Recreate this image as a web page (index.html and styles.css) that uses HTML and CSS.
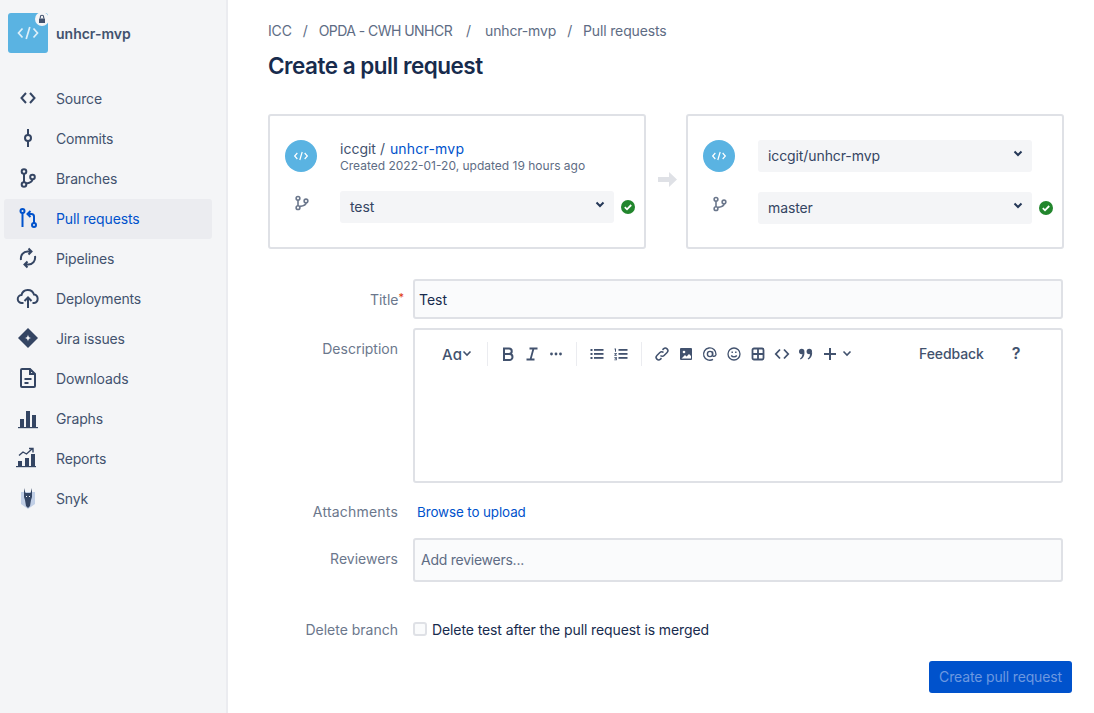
FILE: index.html
```html
<!DOCTYPE html>
<html>
  <head>
    <title>Create a pull request</title>
    <meta charset="UTF-8"/>
    <link rel="stylesheet" href="styles.css">
  </head>
  <body>
    <div class="sidebar">
      <div class="repo-head">
        <div class="repo-logo">
          <svg width="24" height="24" viewBox="0 0 24 24" fill="none" stroke="#dff0f9" stroke-width="1.7"><path d="M6.500 7.500 2.500 12l4 4.500M17.500 7.500l4 4.500-4 4.500M13.800 6l-3.600 12"/></svg>
          <span class="lock-badge">
            <svg width="10" height="10" viewBox="0 0 10 10"><path d="M2 4.500h6V9H2z" fill="#42526e"/><path d="M3.300 4.500V3a1.700 1.700 0 0 1 3.400 0v1.500" fill="none" stroke="#42526e" stroke-width="1.100"/></svg>
          </span>
        </div>
        <span class="repo-name">unhcr-mvp</span>
      </div>
      <div class="nav">
        <a class="nav-item">
          <svg class="nav-icon" viewBox="0 0 24 24" fill="none" stroke="#344563" stroke-width="2"><path d="M10 7 5.500 12l4.500 5M14 7l4.500 5-4.500 5"/></svg>
          Source
        </a>
        <a class="nav-item">
          <svg class="nav-icon" viewBox="0 0 24 24" fill="none" stroke="#344563" stroke-width="2"><circle cx="12" cy="12" r="3"/><path d="M12 3v6M12 15v6"/></svg>
          Commits
        </a>
        <a class="nav-item">
          <svg class="nav-icon" viewBox="0 0 24 24" fill="none" stroke="#344563" stroke-width="2"><circle cx="8" cy="5.500" r="2.300"/><circle cx="8" cy="18.500" r="2.300"/><circle cx="16.500" cy="11" r="2.300"/><path d="M8 7.800v8.400M16.500 13.300c0 2.700-3.500 3.700-6.300 4.200"/></svg>
          Branches
        </a>
        <a class="nav-item active">
          <svg class="nav-icon" viewBox="0 0 24 24" fill="none" stroke="#0052cc" stroke-width="2"><circle cx="6.500" cy="5" r="2"/><circle cx="18" cy="19" r="2"/><path d="M6.500 7v14M18 17v-6.500c0-1.700-1-2.500-2.500-2.500h-2.500M14.500 5l-3 3 3 3"/></svg>
          Pull requests
        </a>
        <a class="nav-item">
          <svg class="nav-icon" viewBox="0 0 24 24" fill="none" stroke="#344563" stroke-width="2"><path d="M5 14C4.200 9 7.500 5.500 11.500 5.500H15M12.500 2.500l3 3-3 3M19 10c.8 5-2.500 8.500-6.500 8.500H9M11.500 21.500l-3-3 3-3"/></svg>
          Pipelines
        </a>
        <a class="nav-item">
          <svg class="nav-icon" viewBox="0 0 24 24" fill="none" stroke="#344563" stroke-width="2"><path d="M7.500 17H6a4 4 0 0 1-.5-8A6.500 6.500 0 0 1 18 8.500a4.300 4.300 0 0 1 0 8.500h-1.500M12 22v-10M8.500 15l3.500-3.500 3.500 3.500"/></svg>
          Deployments
        </a>
        <a class="nav-item">
          <svg class="nav-icon" viewBox="0 0 24 24"><path d="M12 2 22 12 12 22 2 12z" fill="#344563"/><path d="M12 8.500c.3 2.300 1.200 3.200 3.500 3.500-2.300.3-3.200 1.200-3.500 3.500-.3-2.300-1.200-3.200-3.500-3.500 2.300-.3 3.200-1.200 3.500-3.500z" fill="#f4f5f7"/></svg>
          Jira issues
        </a>
        <a class="nav-item">
          <svg class="nav-icon" viewBox="0 0 24 24" fill="none" stroke="#344563" stroke-width="2"><path d="M6 3h8l5 5v12a1 1 0 0 1-1 1H6a1 1 0 0 1-1-1V4a1 1 0 0 1 1-1zM14 3v5h5M8.500 13h7M8.500 17h4"/></svg>
          Downloads
        </a>
        <a class="nav-item">
          <svg class="nav-icon" viewBox="0 0 24 24" fill="#344563"><rect x="4" y="13" width="4" height="8"/><rect x="10" y="5" width="4" height="16"/><rect x="16" y="9" width="4" height="12"/><rect x="2" y="21" width="20" height="1.200"/></svg>
          Graphs
        </a>
        <a class="nav-item">
          <svg class="nav-icon" viewBox="0 0 24 24" fill="#344563"><rect x="2" y="15" width="4" height="5"/><rect x="9" y="12" width="4" height="8"/><rect x="15" y="8" width="4" height="12"/><rect x="0" y="20" width="20" height="1.200"/><path d="M3 9.500l4-3.500 3.500 2L16 3M13 2.500h4v4" fill="none" stroke="#344563" stroke-width="1.400"/></svg>
          Reports
        </a>
        <a class="nav-item">
          <svg class="nav-icon" viewBox="0 0 24 24"><path d="M5 6h14v12l-7 5-7-5z" fill="#c1cfe6"/><path d="M8 2l1.500 5h5L16 2v9l-1 3-1 6-2 2-2-2-1-6-1-3z" fill="#344563"/><path d="M10 10h1v1h-1zM13 10h1v1h-1z" fill="#f4f5f7"/></svg>
          Snyk
        </a>
      </div>
    </div>

    <div class="main">
      <div class="breadcrumbs">
        <span>ICC</span><span class="sep">/</span><span class="crumb-org">OPDA - CWH UNHCR</span><span class="sep">/</span><span>unhcr-mvp</span><span class="sep">/</span><span>Pull requests</span>
      </div>
      <h1>Create a pull request</h1>

      <div class="branches">
        <div class="card">
          <div class="card-row">
            <div class="icon-col">
              <span class="round-logo"><svg width="16" height="16" viewBox="0 0 24 24" fill="none" stroke="#fff" stroke-width="1.800"><path d="M6.500 7.500 2.500 12l4 4.500M17.500 7.500l4 4.500-4 4.500M13.800 6l-3.600 12"/></svg></span>
            </div>
            <div class="repo-info">
              <div class="repo-title">iccgit / <a>unhcr-mvp</a></div>
              <div class="repo-meta">Created 2022-01-20, updated 19 hours ago</div>
            </div>
          </div>
          <div class="card-row branch-row">
            <div class="icon-col">
              <svg width="16" height="16" viewBox="0 0 24 24" fill="none" stroke="#6b778c" stroke-width="2.400"><circle cx="6" cy="5" r="2.800"/><circle cx="6" cy="19" r="2.800"/><circle cx="18" cy="9" r="2.800"/><path d="M6 8v8M18 12c0 3.500-5 4.500-9 5"/></svg>
            </div>
            <div class="select">test<svg class="chevron" width="10" height="8" viewBox="0 0 10 8" fill="none" stroke="#253858" stroke-width="2"><path d="M1.500 1.500 5 5l3.500-3.500"/></svg></div>
            <svg class="ok" width="14" height="14" viewBox="0 0 14 14"><circle cx="7" cy="7" r="7" fill="#22862d"/><path d="M3.800 7.200 6 9.300l4.200-4.300" fill="none" stroke="#fff" stroke-width="1.800"/></svg>
          </div>
        </div>

        <div class="arrow-col">
          <svg width="19" height="15" viewBox="0 0 19 15" fill="#dfe1e6"><path d="M0 5h11V0l8 7.500-8 7.500v-5H0z"/></svg>
        </div>

        <div class="card">
          <div class="card-row">
            <div class="icon-col">
              <span class="round-logo"><svg width="16" height="16" viewBox="0 0 24 24" fill="none" stroke="#fff" stroke-width="1.800"><path d="M6.500 7.500 2.500 12l4 4.500M17.500 7.500l4 4.500-4 4.500M13.800 6l-3.600 12"/></svg></span>
            </div>
            <div class="select">iccgit/unhcr-mvp<svg class="chevron" width="10" height="8" viewBox="0 0 10 8" fill="none" stroke="#253858" stroke-width="2"><path d="M1.500 1.500 5 5l3.500-3.500"/></svg></div>
            <span class="ok-spacer"></span>
          </div>
          <div class="card-row target-branch">
            <div class="icon-col">
              <svg width="16" height="16" viewBox="0 0 24 24" fill="none" stroke="#6b778c" stroke-width="2.400"><circle cx="6" cy="5" r="2.800"/><circle cx="6" cy="19" r="2.800"/><circle cx="18" cy="9" r="2.800"/><path d="M6 8v8M18 12c0 3.500-5 4.500-9 5"/></svg>
            </div>
            <div class="select">master<svg class="chevron" width="10" height="8" viewBox="0 0 10 8" fill="none" stroke="#253858" stroke-width="2"><path d="M1.500 1.500 5 5l3.500-3.500"/></svg></div>
            <svg class="ok" width="14" height="14" viewBox="0 0 14 14"><circle cx="7" cy="7" r="7" fill="#22862d"/><path d="M3.800 7.200 6 9.300l4.200-4.300" fill="none" stroke="#fff" stroke-width="1.800"/></svg>
          </div>
        </div>
      </div>

      <div class="form">
        <div class="form-row title-row">
          <label>Title<span class="req">*</span></label>
          <div class="field input-box dark">Test</div>
        </div>
        <div class="form-row desc-row">
          <label>Description</label>
          <div class="field editor">
            <div class="toolbar">
              <span class="tool-text aa">A&#593;</span>
              <svg class="mini-chevron" width="10" height="8" viewBox="0 0 10 8" fill="none" stroke="#42526e" stroke-width="1.600"><path d="M1.500 1.500 5 5l3.500-3.500"/></svg>
              <span class="tool-sep first"></span>
              <svg class="tool" viewBox="0 0 16 16" fill="none" stroke="#42526e" stroke-width="2"><path d="M4 2.500h5a2.700 2.700 0 0 1 0 5.500H4zM4 8h5.500a3 3 0 0 1 0 6H4zM4 2v12.500"/></svg>
              <svg class="tool" viewBox="0 0 16 16" fill="none" stroke="#42526e" stroke-width="1.800"><path d="M5.500 2.500h8M2.500 13.500h8M9.500 2.500l-3 11"/></svg>
              <svg class="tool" viewBox="0 0 16 16" fill="#42526e"><circle cx="3.500" cy="8" r="1.400"/><circle cx="8" cy="8" r="1.400"/><circle cx="12.500" cy="8" r="1.400"/></svg>
              <span class="tool-sep"></span>
              <svg class="tool" viewBox="0 0 16 16" fill="#42526e"><rect x="1.500" y="3" width="2" height="2"/><rect x="1.500" y="7" width="2" height="2"/><rect x="1.500" y="11" width="2" height="2"/><rect x="5" y="3" width="9.500" height="1.800"/><rect x="5" y="7" width="9.500" height="1.800"/><rect x="5" y="11" width="9.500" height="1.800"/></svg>
              <svg class="tool" viewBox="0 0 16 16" fill="#42526e"><path d="M1.500 2.500h1.500v3.300H2V3.500h-.5zM1.300 7h2.500v.9L2.500 9h1.300v.8H1.300v-.9l1.400-1.100H1.300zM1.300 11h2.500v3.300H1.300v-.7h1.600v-.6H1.800v-.7h1.100v-.6H1.300z"/><rect x="5.500" y="3" width="9" height="1.800"/><rect x="5.500" y="7" width="9" height="1.800"/><rect x="5.500" y="11" width="9" height="1.800"/></svg>
              <span class="tool-sep"></span>
              <svg class="tool" viewBox="0 0 16 16" fill="none" stroke="#42526e" stroke-width="1.500"><path d="M6.500 9.500a2.500 2.500 0 0 0 3.600 0l3-3a2.500 2.500 0 0 0-3.600-3.600l-1 1M9.500 6.500a2.500 2.500 0 0 0-3.600 0l-3 3a2.500 2.500 0 0 0 3.600 3.600l1-1"/></svg>
              <svg class="tool" viewBox="0 0 16 16"><rect x="2" y="2" width="12" height="12" rx="1" fill="#42526e"/><circle cx="6" cy="6" r="1.300" fill="#fff"/><path d="M3.500 12.500 7 9l1.500 1.500L11 8l2 2v2.500z" fill="#fff"/></svg>
              <svg class="tool" viewBox="0 0 16 16" fill="none" stroke="#42526e" stroke-width="1.400"><circle cx="8" cy="8" r="2.600"/><path d="M10.600 5.400v3.800c0 1.700 3 1.500 3.400-.8A6.200 6.200 0 1 0 11 13.400"/></svg>
              <svg class="tool" viewBox="0 0 16 16" fill="none" stroke="#42526e" stroke-width="1.300"><circle cx="8" cy="8" r="6"/><path d="M5.200 9.500c1.300 1.800 4.300 1.800 5.600 0"/><path d="M5.500 5.500h1.400v1.400H5.500zM9.100 5.500h1.400v1.400H9.100z" fill="#42526e" stroke="none"/></svg>
              <svg class="tool" viewBox="0 0 16 16" fill="none" stroke="#42526e" stroke-width="1.800"><rect x="2.500" y="2.500" width="11" height="11" rx="1.500"/><path d="M8 3v10M3 8h10"/></svg>
              <svg class="tool" viewBox="0 0 16 16" fill="none" stroke="#42526e" stroke-width="1.800"><path d="M6 3.500 1.800 8 6 12.500M10 3.500 14.200 8 10 12.500"/></svg>
              <svg class="tool" viewBox="0 0 16 16" fill="#42526e"><circle cx="3.700" cy="5.500" r="2.700"/><circle cx="11.300" cy="5.500" r="2.700"/><path d="M4.500 6.500h2C6.500 10 5 12.500 2.500 13.500l-.5-1C3.800 11.500 4.500 9.500 4.500 6.500zM12.200 6.500h2c0 3.500-1.500 6-4 7l-.5-1c1.800-1 2.500-3 2.500-6z"/></svg>
              <svg class="tool" viewBox="0 0 16 16" fill="none" stroke="#42526e" stroke-width="2"><path d="M8 2v12M2 8h12"/></svg>
              <svg class="mini-chevron" width="10" height="8" viewBox="0 0 10 8" fill="none" stroke="#42526e" stroke-width="1.600"><path d="M1.500 1.500 5 5l3.500-3.500"/></svg>
              <span class="tool-text feedback">Feedback</span>
              <span class="tool-text help">?</span>
            </div>
          </div>
        </div>
        <div class="form-row attach-row">
          <label>Attachments</label>
          <a class="browse">Browse to upload</a>
        </div>
        <div class="form-row reviewers-row">
          <label>Reviewers</label>
          <div class="field input-box muted">Add reviewers...</div>
        </div>
        <div class="form-row delete-row">
          <label>Delete branch</label>
          <span class="checkbox"></span>
          <span class="check-text">Delete test after the pull request is merged</span>
        </div>
      </div>

      <div class="actions">
        <button class="create-btn" type="button">Create pull request</button>
      </div>
    </div>
  </body>
</html>
```

FILE: styles.css
```css
html, body {
  height: 100%;
}
body {
  margin: 0;
  display: flex;
  height: 713px;
  overflow: hidden;
  font-family: "Inter", "Liberation Sans", sans-serif;
  font-size: 14px;
  color: #172b4d;
  background-color: white;
}
a {
  text-decoration: none;
  color: #0052cc;
}

/* sidebar */
.sidebar {
  box-sizing: border-box;
  width: 228px;
  flex-shrink: 0;
  padding: 13px 14px 0 4px;
  background-color: #f4f5f7;
  border-right: 2px solid #ebecf0;
}
.repo-head {
  display: flex;
  align-items: center;
  padding-left: 4px;
  gap: 8px;
  height: 40px;
}
.repo-logo {
  position: relative;
  display: flex;
  align-items: center;
  justify-content: center;
  width: 40px;
  height: 40px;
  border-radius: 3px;
  background-color: #5ab3e2;
}
.lock-badge {
  position: absolute;
  top: -1px;
  right: -1px;
  display: flex;
  align-items: center;
  justify-content: center;
  width: 14px;
  height: 14px;
  border-radius: 50%;
  background-color: #f4f5f7;
}
.repo-name {
  font-weight: 600;
  color: #42526e;
}
.nav {
  display: flex;
  flex-direction: column;
  margin-top: 26px;
}
.nav-item {
  box-sizing: border-box;
  display: flex;
  align-items: center;
  height: 40px;
  gap: 16px;
  padding: 0 0 2px 12px;
  border-radius: 3px;
  letter-spacing: -0.15px;
  color: #42526e;
}
.nav-item.active {
  color: #0052cc;
  background-color: #ebecf0;
}
.nav-icon {
  width: 24px;
  height: 24px;
  flex-shrink: 0;
}

/* main column */
.main {
  flex: 1;
  min-width: 0;
  padding: 22px 30px 0 40px;
}
.breadcrumbs {
  display: flex;
  line-height: 18px;
  letter-spacing: -0.15px;
  color: #5e6c84;
}
.sep {
  margin: 0 11px;
}
.crumb-org {
  letter-spacing: -0.55px;
}
.crumb-org + .sep {
  margin: 0 14px;
}
h1 {
  margin: 11px 0 0 0;
  font-size: 22.5px;
  line-height: 30px;
  font-weight: 600;
  letter-spacing: -0.5px;
  color: #172b4d;
}

/* source and destination */
.branches {
  display: flex;
  margin-top: 33px;
}
.card {
  box-sizing: border-box;
  width: 378px;
  height: 135px;
  padding: 24px 9px 0 15px;
  border: 2px solid #dfe1e6;
  border-radius: 3px;
}
.arrow-col {
  display: flex;
  align-items: center;
  justify-content: center;
  width: 40px;
}
.arrow-col svg {
  margin: -4px 0 0 3px;
}
.card-row {
  display: flex;
  align-items: center;
}
.icon-col {
  display: flex;
  justify-content: center;
  width: 32px;
  margin-right: 23px;
  flex-shrink: 0;
}
.round-logo {
  display: flex;
  align-items: center;
  justify-content: center;
  width: 32px;
  height: 32px;
  border-radius: 50%;
  background-color: #5ab3e2;
}
.repo-info {
  height: 32px;
}
.repo-title {
  line-height: 18px;
  color: #42526e;
}
.repo-title a {
  margin-left: 1px;
  letter-spacing: 0.2px;
}
.repo-meta {
  font-size: 12px;
  line-height: 15px;
  color: #5e6c84;
}
.branch-row {
  margin-top: 19px;
}
.target-branch {
  margin-top: 20px;
}
.branch-row .icon-col, .target-branch .icon-col {
  margin-top: -8px;
}
.icon-col > svg {
  margin-left: 2px;
}
.select {
  position: relative;
  display: flex;
  align-items: center;
  box-sizing: border-box;
  width: 274px;
  height: 32px;
  padding: 0 0 2px 10px;
  flex-shrink: 0;
  border-radius: 3px;
  letter-spacing: -0.1px;
  color: #344563;
  background-color: #f4f5f7;
}
.chevron {
  position: absolute;
  right: 9px;
  top: 10px;
}
.ok {
  margin: -1px 0 0 7px;
  flex-shrink: 0;
}
.ok-spacer {
  width: 21px;
}

/* form */
.form {
  margin-top: 30px;
}
.form-row {
  display: flex;
  align-items: center;
}
label {
  box-sizing: border-box;
  width: 130px;
  margin-right: 15px;
  text-align: right;
  flex-shrink: 0;
  color: #6b778c;
}
.req {
  position: relative;
  top: -4px;
  margin-right: -6px;
  font-size: 11px;
  color: #de350b;
}
.field {
  box-sizing: border-box;
  width: 650px;
  border: 2px solid #dfe1e6;
  border-radius: 3px;
}
.input-box {
  display: flex;
  align-items: center;
  background-color: #fafbfc;
}
.title-row .input-box {
  height: 40px;
  padding-left: 4px;
}
.input-box.dark {
  color: #172b4d;
}
.desc-row {
  align-items: flex-start;
  margin-top: 9px;
}
.desc-row label {
  padding-top: 12px;
}
.editor {
  height: 155px;
}
.toolbar {
  display: flex;
  align-items: center;
  height: 16px;
  margin-top: 16px;
  padding-left: 27px;
  color: #42526e;
}
.tool-text {
  font-weight: 500;
}
.aa {
  font-size: 15px;
  width: 20px;
}
.mini-chevron {
  flex-shrink: 0;
}
.tool {
  width: 16px;
  height: 16px;
  flex-shrink: 0;
  margin: 0 4px;
}
.tool-sep {
  width: 1px;
  height: 24px;
  margin: 0 8px;
  flex-shrink: 0;
  background-color: #ebecf0;
}
.tool-sep.first {
  margin-left: 15px;
}
.feedback {
  margin: -2px 0 0 67px;
  letter-spacing: -0.1px;
}
.help {
  margin: -2px 0 0 28px;
  font-size: 16px;
  font-weight: 600;
}
.attach-row {
  height: 18px;
  margin-top: 19px;
}
.attach-row label {
  letter-spacing: 0.2px;
}
.browse {
  margin: 2px 0 0 4px;
  font-size: 13.4px;
  letter-spacing: -0.1px;
}
.reviewers-row {
  margin-top: 18px;
}
.reviewers-row label {
  margin-bottom: 3px;
}
.reviewers-row .input-box {
  height: 44px;
  padding: 0 0 2px 6px;
  letter-spacing: -0.25px;
}
.muted {
  color: #5e6c84;
}
.delete-row {
  height: 18px;
  margin-top: 38px;
}
.checkbox {
  box-sizing: border-box;
  width: 14px;
  height: 14px;
  margin: 0 5px 0 0;
  border: 2px solid #dfe1e6;
  border-radius: 3px;
  background-color: #fafbfc;
}
.check-text {
  letter-spacing: -0.1px;
}
.actions {
  display: flex;
  justify-content: flex-end;
  margin: 23px -8px 0 0;
}
.create-btn {
  width: 143px;
  height: 32px;
  padding: 0 0 2px 0;
  border: none;
  border-radius: 3px;
  font-family: inherit;
  font-size: 14px;
  letter-spacing: -0.15px;
  color: #6c98e0;
  background-color: #0052cc;
}
```
